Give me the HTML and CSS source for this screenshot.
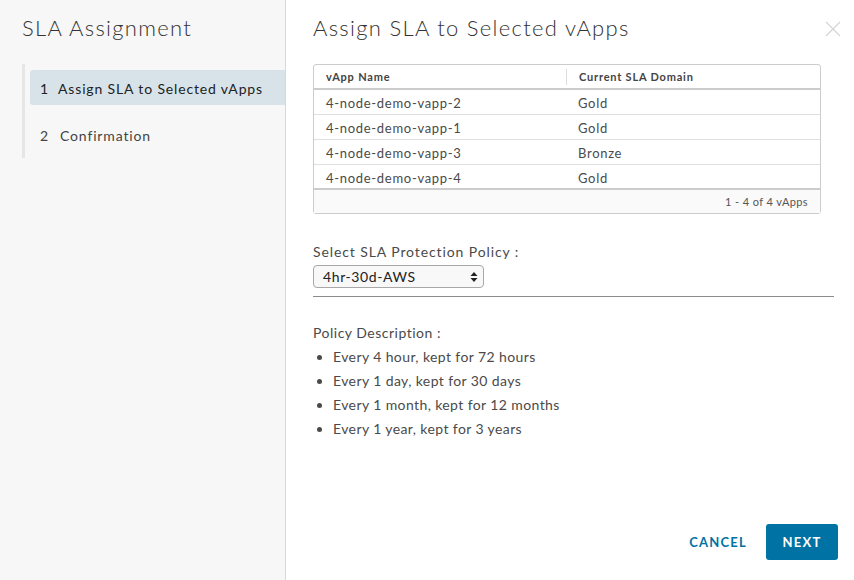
FILE: index.html
```html
<!DOCTYPE html>
<html>
<head>
<meta charset="utf-8">
<link rel="stylesheet" href="styles.css">
</head>
<body>
<div class="wizard">
  <aside class="side">
    <h1 class="side-title">SLA Assignment</h1>
    <nav class="steps">
      <div class="step active"><span class="num">1</span>Assign SLA to Selected vApps</div>
      <div class="step"><span class="num">2</span>Confirmation</div>
    </nav>
  </aside>
  <main class="content">
    <div class="head">
      <h2 class="title">Assign SLA to Selected vApps</h2>
      <svg class="close" width="16" height="16" viewBox="0 0 16 16"><path d="M1 1L15 15M15 1L1 15" stroke="#d4d4d4" stroke-width="1.2" fill="none"/></svg>
    </div>
    <div class="grid">
      <div class="row hdr"><div class="c1">vApp Name</div><div class="c2 sep">Current SLA Domain</div></div>
      <div class="row"><div class="c1">4-node-demo-vapp-2</div><div class="c2">Gold</div></div>
      <div class="row"><div class="c1">4-node-demo-vapp-1</div><div class="c2">Gold</div></div>
      <div class="row"><div class="c1">4-node-demo-vapp-3</div><div class="c2">Bronze</div></div>
      <div class="row last"><div class="c1">4-node-demo-vapp-4</div><div class="c2">Gold</div></div>
      <div class="foot">1 - 4 of 4 vApps</div>
    </div>
    <div class="field">
      <label class="lbl sel-lbl">Select SLA Protection Policy :</label>
      <div class="select"><span>4hr-30d-AWS</span><svg width="8" height="12" viewBox="0 0 8 12"><path d="M4 1L7.5 5H0.5Z M4 11L7.5 7H0.5Z" fill="#222"/></svg></div>
    </div>
    <hr class="rule">
    <div class="desc">
      <div class="lbl desc-lbl">Policy Description :</div>
      <ul class="list">
        <li>Every 4 hour, kept for 72 hours</li>
        <li>Every 1 day, kept for 30 days</li>
        <li>Every 1 month, kept for 12 months</li>
        <li>Every 1 year, kept for 3 years</li>
      </ul>
    </div>
    <div class="actions">
      <button class="btn link">CANCEL</button>
      <button class="btn primary">NEXT</button>
    </div>
  </main>
</div>
</body>
</html>
```

FILE: styles.css
```css
* { box-sizing: border-box; }
html, body { margin: 0; padding: 0; }
body {
  font-family: Lato, "Open Sans", sans-serif;
  color: #4a4a4a;
  background: #fff;
  width: 854px;
  height: 580px;
  overflow: hidden;
}
.wizard { display: flex; height: 580px; }
.side {
  width: 286px;
  flex: none;
  background: #f7f7f7;
  border-right: 1px solid #d8d8d8;
  padding: 14px 0 0 22px;
}
.side-title {
  margin: 0;
  font-size: 22px;
  font-weight: 300;
  line-height: 28px;
  color: #333;
  letter-spacing: 1.3px;
}
.steps {
  margin-top: 22px;
  border-left: 3px solid #e6e6e6;
  padding: 6px 0 6px 5px;
}
.step {
  height: 35px;
  display: flex;
  align-items: center;
  padding-left: 10px;
  padding-top: 2px;
  font-size: 14px;
  color: #444;
  letter-spacing: 0.85px;
  margin-bottom: 12px;
}
.step:last-child { margin-bottom: 0; }
.step.active { background: #d8e3e9; border-radius: 3px 0 0 3px; color: #222; }
.num { margin-right: 9px; }
.step:last-child .num { margin-right: 11px; }
.content {
  flex: 1;
  padding: 14px 20px 0 27px;
  display: flex;
  flex-direction: column;
}
.head { display: flex; justify-content: space-between; align-items: flex-start; }
.title {
  margin: 0;
  font-size: 22px;
  font-weight: 300;
  line-height: 28px;
  color: #333;
  letter-spacing: 1.3px;
}
.close { margin: 7px -7px 0 0; }
.grid {
  margin-top: 22px;
  width: 508px;
  border: 1px solid #ccc;
  border-radius: 3px;
  font-size: 13px;
  color: #4a4a4a;
  letter-spacing: 0.7px;
}
.row { display: flex; height: 25px; align-items: center; border-bottom: 1px solid #e0e0e0; padding-top: 2px; }
.row.last { border-bottom: 2px solid #ccc; }
.row.hdr { border-bottom: 2px solid #ccc; font-size: 11px; font-weight: 700; color: #444; height: 25px; padding-top: 0; letter-spacing: 0.8px; }
.c1 { width: 252px; padding-left: 12px; }
.c2 { flex: 1; padding-left: 12px; }
.sep { border-left: 1px solid #ddd; line-height: 16px; }
.foot {
  height: 23px;
  background: #fafafa;
  font-size: 11px;
  text-align: right;
  padding-right: 12px;
  line-height: 23px;
  color: #555;
  letter-spacing: 0.4px;
}
.field { margin-top: 29px; }
.lbl { font-size: 14px; color: #4a4a4a; display: block; line-height: 18px; }
.sel-lbl { letter-spacing: 0.9px; }
.desc-lbl { letter-spacing: 0.5px; }
.select {
  margin-top: 4px;
  width: 171px;
  height: 23px;
  border: 1px solid #a8a8a8;
  border-radius: 4px;
  background: #f8f8f8;
  display: flex;
  align-items: center;
  justify-content: space-between;
  padding: 0 5px 0 9px;
  font-size: 14px;
  color: #222;
  letter-spacing: 0.6px;
}
.rule { margin: 8px 0 0 0; width: 521px; border: 0; border-top: 1px solid #8c8c8c; }
.desc { margin-top: 27px; }
.list { margin: 3px 0 0 0; padding-left: 20px; font-size: 14px; color: #4a4a4a; }
.list li { line-height: 24px; letter-spacing: 0.4px; }
.actions { margin-top: auto; margin-bottom: 20px; display: flex; justify-content: flex-end; align-items: center; margin-right: -4px; }
.btn {
  font-family: inherit;
  font-size: 13px;
  font-weight: 700;
  letter-spacing: 1.2px;
  height: 36px;
  border: 0;
  border-radius: 3px;
  padding: 0 19px;
}
.link { background: transparent; color: #0072a3; margin-right: 0; }
.primary { background: #0072a3; color: #fff; width: 72px; padding: 0; }
```
